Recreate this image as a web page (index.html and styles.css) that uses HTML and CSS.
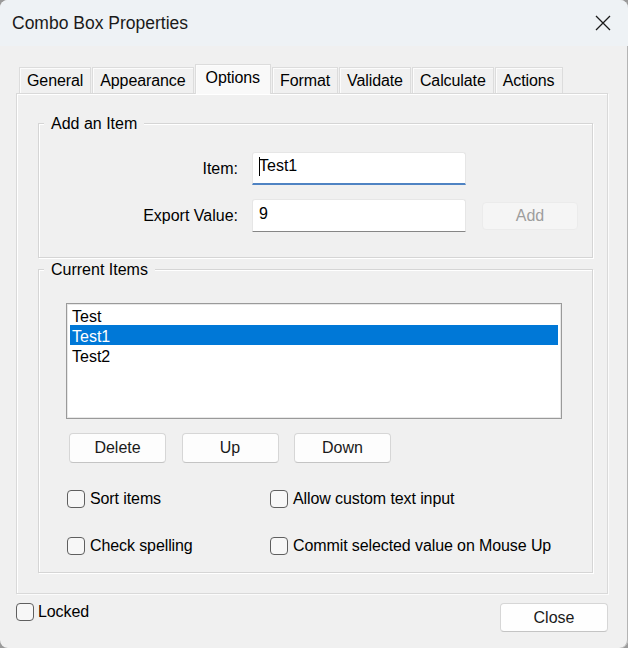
FILE: index.html
```html
<!DOCTYPE html>
<html lang="en">
<head>
<meta charset="utf-8">
<title>Combo Box Properties</title>
<link rel="stylesheet" href="styles.css">
</head>
<body>
<div class="window">
  <div class="titlebar">
    <span class="title">Combo Box Properties</span>
    <svg class="close-icon" width="16" height="16" viewBox="0 0 16 16" aria-hidden="true">
      <path d="M1 1 L15 15 M15 1 L1 15" stroke="#1a1a1a" stroke-width="1.3" fill="none"/>
    </svg>
  </div>
  <div class="main">
    <div class="tabs">
      <div class="tab">General</div>
      <div class="tab">Appearance</div>
      <div class="tab active">Options</div>
      <div class="tab">Format</div>
      <div class="tab">Validate</div>
      <div class="tab">Calculate</div>
      <div class="tab">Actions</div>
    </div>
    <div class="panel">
      <div class="group add-group">
        <div class="group-title">Add an Item</div>
        <div class="form">
          <label class="lbl">Item:</label>
          <div class="input focused"><span class="caret"></span>Test1</div>
          <div></div>
          <label class="lbl">Export Value:</label>
          <div class="input">9</div>
          <button class="btn add-btn" disabled>Add</button>
        </div>
      </div>
      <div class="group items-group">
        <div class="group-title">Current Items</div>
        <div class="listbox">
          <div class="opt">Test</div>
          <div class="opt sel">Test1</div>
          <div class="opt">Test2</div>
        </div>
        <div class="btn-row">
          <button class="btn">Delete</button>
          <button class="btn">Up</button>
          <button class="btn">Down</button>
        </div>
        <div class="checks">
          <label class="check"><span class="box"></span>Sort items</label>
          <label class="check"><span class="box"></span>Allow custom text input</label>
          <label class="check"><span class="box"></span>Check spelling</label>
          <label class="check"><span class="box"></span>Commit selected value on Mouse Up</label>
        </div>
      </div>
    </div>
    <div class="footer">
      <label class="check"><span class="box"></span>Locked</label>
      <button class="btn close-btn">Close</button>
    </div>
  </div>
</div>
</body>
</html>
```
FILE: styles.css
```css
* { box-sizing: border-box; }

html, body {
  margin: 0;
  padding: 0;
  background: #9a9a9a;
}

body {
  font-family: "Liberation Sans", Arial, sans-serif;
  font-size: 16px;
  color: #000;
}

.window {
  width: 628px;
  height: 648px;
  background: #f0f0f0;
  border-radius: 8px;
  overflow: hidden;
  box-shadow: inset -1px 0 0 #b4b4b4;
}

.titlebar {
  height: 46px;
  background: #eef2f5;
  display: flex;
  align-items: center;
  justify-content: space-between;
  padding: 0 17px 0 12px;
}

.title {
  font-size: 17.5px;
  color: #1a1a1a;
}

.close-icon { display: block; }

.main {
  padding: 18px 20px 0 16px;
}

.tabs {
  display: flex;
  align-items: flex-end;
  gap: 1px;
  height: 29px;
  margin-left: 3px;
}

.tab {
  height: 26px;
  padding: 0 7px;
  border: 1px solid #dcdcdc;
  border-bottom: none;
  box-shadow: inset 1px 1px 0 #fcfcfc;
  background: #f0f0f0;
  display: flex;
  align-items: center;
  line-height: 1;
  color: #000;
  letter-spacing: -0.1px;
}

.tab.active {
  height: 30px;
  margin-bottom: -1px;
  padding: 0 10px 4px;
  background: #f9f9f9;
  z-index: 1;
}

.panel {
  height: 501px;
  border: 1px solid #d9d9d9;
  box-shadow: inset 1px 1px 0 #fff, 1px 1px 0 #fbfbfb;
  padding: 29px 14px 0 21px;
}

.group {
  border: 1px solid #d5d5d5;
  box-shadow: inset 1px 1px 0 #fff, 1px 1px 0 #fff;
}

.add-group { height: 135px; }

.items-group {
  height: 304px;
  margin-top: 11px;
}

.group-title {
  margin: -10px 0 0 5px;
  padding: 0 7px;
  width: max-content;
  line-height: 20px;
  background: #f0f0f0;
}

.form {
  margin-top: 18px;
  display: grid;
  grid-template-columns: 213px 214px auto;
  row-gap: 14px;
  align-items: center;
}

.lbl {
  text-align: right;
  padding-right: 14px;
}

.input {
  height: 33px;
  background: #fff;
  border: 1px solid #e6e6e6;
  border-bottom: 1px solid #868686;
  border-radius: 3px 3px 0 0;
  padding: 0 6px 4px;
  display: flex;
  align-items: center;
}

.input.focused {
  border-bottom: 2px solid #4f83c3;
}

.caret {
  display: inline-block;
  width: 1px;
  height: 19px;
  background: #000;
  margin-right: -1px;
}

.btn {
  font-family: inherit;
  font-size: 16px;
  color: #1a1a1a;
  background: #fdfdfd;
  border: 1px solid #d6d6d6;
  border-bottom-color: #c4c4c4;
  border-radius: 4px;
  padding: 0;
}

.add-btn {
  width: 96px;
  height: 28px;
  margin-left: 16px;
  background: #f5f5f5;
  border-color: #ebebeb;
  color: #9d9d9d;
}

.listbox {
  margin: 23px 0 0 27px;
  width: 496px;
  height: 116px;
  background: #fff;
  border: 1px solid #9a9a9a;
  box-shadow: inset 0 0 0 1px #e8e8e8;
  padding: 1px 3px;
}

.opt {
  line-height: 23px;
  height: 20px;
  padding-left: 2px;
}

.opt.sel {
  background: #0078d7;
  color: #fff;
}

.btn-row {
  display: flex;
  gap: 15.5px;
  margin: 14px 0 0 30px;
}

.btn-row .btn {
  width: 97px;
  height: 30px;
}

.checks {
  display: grid;
  grid-template-columns: 203px auto;
  row-gap: 29px;
  margin: 27px 0 0 28px;
}

.check {
  display: flex;
  align-items: center;
  gap: 5px;
  height: 18px;
  letter-spacing: -0.1px;
}

.box {
  width: 18px;
  height: 18px;
  border: 1px solid #5f5f5f;
  border-radius: 4px;
  background: #f7f7f7;
  flex: none;
}

.footer {
  display: flex;
  justify-content: space-between;
  align-items: flex-start;
  margin-top: 9px;
}

.footer .check {
  gap: 4px;
}

.close-btn {
  width: 108px;
  height: 29px;
  background: #fefefe;
}
```
